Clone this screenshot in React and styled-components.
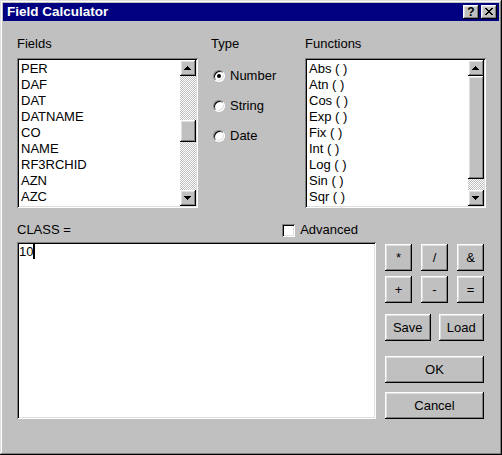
import styled, { createGlobalStyle } from "styled-components";

const GlobalStyle = createGlobalStyle`
  html, body {
    margin: 0;
    padding: 0;
    background: #c0c0c0;
  }
  body {
    font-family: "Liberation Sans", Arial, sans-serif;
    font-size: 13px;
    color: #000;
  }
`;

const raised = `
  box-shadow: inset -1px -1px #000, inset 1px 1px #fff,
    inset -2px -2px #808080, inset 2px 2px #dfdfdf;
`;
const sunken = `
  box-shadow: inset 1px 1px #808080, inset -1px -1px #fff,
    inset 2px 2px #000, inset -2px -2px #dfdfdf;
`;

const Window = styled.div`
  width: 502px;
  height: 455px;
  box-sizing: border-box;
  padding: 3px;
  background: #c0c0c0;
  box-shadow: inset -1px -1px #000, inset 1px 1px #dfdfdf,
    inset -2px -2px #808080, inset 2px 2px #fff;
  display: flex;
  flex-direction: column;
`;
const TitleBar = styled.div`
  height: 18px;
  background: #000080;
  display: flex;
  align-items: center;
  padding: 0 2px;
  color: #fff;
`;
const TitleText = styled.div`
  flex: 1;
  padding-left: 2px;
  line-height: 18px;
  font-size: 13.5px;
  font-weight: bold;
  white-space: nowrap;
`;
const CaptionButtons = styled.div`
  display: flex;
  gap: 2px;
`;
const CaptionButton = styled.div`
  width: 16px;
  height: 14px;
  background: #c0c0c0;
  ${raised}
  display: flex;
  align-items: center;
  justify-content: center;
  color: #000;
  font-weight: bold;
  font-size: 12px;
  line-height: 14px;
`;
const Body = styled.div`
  padding: 15px 16px 0 14px;
  display: flex;
  flex-direction: column;
`;
const TopRow = styled.div`
  display: grid;
  grid-template-columns: 181px 81px 181px;
  column-gap: 13px;
`;
const Group = styled.div`
  display: flex;
  flex-direction: column;
  gap: 6px;
`;
const Label = styled.div`
  line-height: 16px;
  white-space: nowrap;
`;
const ListBox = styled.div`
  height: 150px;
  box-sizing: border-box;
  padding: 2px;
  background: #fff;
  ${sunken}
  display: flex;
`;
const Items = styled.div`
  flex: 1;
  padding: 1px 2px;
  overflow: hidden;
`;
const Item = styled.div`
  line-height: 16px;
  white-space: nowrap;
`;
const ScrollBar = styled.div`
  width: 16px;
  display: flex;
  flex-direction: column;
`;
const ArrowButton = styled.div`
  width: 16px;
  height: 16px;
  flex-shrink: 0;
  background: #c0c0c0;
  ${raised}
  display: flex;
  align-items: center;
  justify-content: center;
`;
const Track = styled.div`
  flex: 1;
  display: flex;
  flex-direction: column;
  background: repeating-conic-gradient(#c0c0c0 0% 25%, #fff 0% 50%) 0 0 / 2px 2px;
`;
const Thumb = styled.div`
  margin-top: ${(p) => p.$offset}px;
  height: ${(p) => p.$size}px;
  background: #c0c0c0;
  ${raised}
`;
const RadioList = styled.div`
  display: flex;
  flex-direction: column;
  gap: 14px;
  padding-top: 10px;
`;
const Radio = styled.div`
  display: flex;
  align-items: center;
  gap: 5px;
  padding-left: 2px;
  line-height: 16px;
  white-space: nowrap;
`;
const RadioDot = styled.span`
  width: 12px;
  height: 12px;
  box-sizing: border-box;
  border-radius: 50%;
  background: #fff;
  border: 1px solid;
  border-color: #808080 #fff #fff #808080;
  box-shadow: inset 1px 1px #000, inset -1px -1px #dfdfdf;
  position: relative;
  &::after {
    content: "";
    display: ${(p) => (p.$checked ? "block" : "none")};
    position: absolute;
    left: 3px;
    top: 3px;
    width: 4px;
    height: 4px;
    border-radius: 50%;
    background: #000;
  }
`;
const Bottom = styled.div`
  margin-top: 14px;
  display: grid;
  grid-template-columns: 359px 99px;
  grid-template-rows: 16px 177px;
  column-gap: 9px;
  row-gap: 4px;
`;
const LabelRow = styled.div`
  grid-column: 1;
  display: flex;
  align-items: center;
  line-height: 16px;
`;
const CheckLabel = styled.label`
  margin-left: auto;
  margin-right: 18px;
  display: flex;
  align-items: center;
  gap: 5px;
`;
const CheckBox = styled.span`
  width: 13px;
  height: 13px;
  background: #fff;
  ${sunken}
`;
const EditBox = styled.div`
  grid-column: 1;
  background: #fff;
  ${sunken}
  padding: 2px 2px;
  line-height: 16px;
`;
const Caret = styled.span`
  display: inline-block;
  width: 2px;
  height: 15px;
  background: #000;
  vertical-align: -3px;
`;
const ButtonColumn = styled.div`
  grid-column: 2;
  margin-top: 2px;
  display: flex;
  flex-direction: column;
`;
const ButtonGrid = styled.div`
  display: grid;
  grid-template-columns: repeat(${(p) => p.$cols}, 1fr);
  column-gap: ${(p) => p.$colGap}px;
  row-gap: ${(p) => p.$rowGap || 0}px;
  margin-top: ${(p) => p.$top || 0}px;
`;
const Button = styled.button`
  height: 27px;
  padding: 0;
  border: none;
  background: #c0c0c0;
  ${raised}
  font-family: inherit;
  font-size: 13px;
  color: #000;
  line-height: 16px;
`;

const ArrowIcon = ({ down }) => (
  <svg width="7" height="4" viewBox="0 0 7 4" shapeRendering="crispEdges" style={{ marginTop: -1, marginLeft: -1 }}>
    {[0, 1, 2, 3].map((r) => {
      const row = down ? 3 - r : r;
      return <rect key={r} x={3 - r} y={row} width={r * 2 + 1} height="1" fill="#000" />;
    })}
  </svg>
);

const CloseIcon = () => (
  <svg width="8" height="7" viewBox="0 0 8 7" shapeRendering="crispEdges" style={{ marginTop: -1 }}>
    <rect x="0" y="0" width="2" height="1" fill="#000" />
    <rect x="6" y="0" width="2" height="1" fill="#000" />
    <rect x="1" y="1" width="2" height="1" fill="#000" />
    <rect x="5" y="1" width="2" height="1" fill="#000" />
    <rect x="2" y="2" width="4" height="1" fill="#000" />
    <rect x="3" y="3" width="2" height="1" fill="#000" />
    <rect x="2" y="4" width="4" height="1" fill="#000" />
    <rect x="1" y="5" width="2" height="1" fill="#000" />
    <rect x="5" y="5" width="2" height="1" fill="#000" />
    <rect x="0" y="6" width="2" height="1" fill="#000" />
    <rect x="6" y="6" width="2" height="1" fill="#000" />
  </svg>
);

const List = ({ items, thumbOffset, thumbSize }) => (
  <ListBox>
    <Items>
      {items.map((it) => (
        <Item key={it}>{it}</Item>
      ))}
    </Items>
    <ScrollBar>
      <ArrowButton>
        <ArrowIcon />
      </ArrowButton>
      <Track>
        <Thumb $offset={thumbOffset} $size={thumbSize} />
      </Track>
      <ArrowButton>
        <ArrowIcon down />
      </ArrowButton>
    </ScrollBar>
  </ListBox>
);

const fields = ["PER", "DAF", "DAT", "DATNAME", "CO", "NAME", "RF3RCHID", "AZN", "AZC"];
const functions = ["Abs ( )", "Atn ( )", "Cos ( )", "Exp ( )", "Fix ( )", "Int ( )", "Log ( )", "Sin ( )", "Sqr ( )"];
const types = ["Number", "String", "Date"];
const operators = ["*", "/", "&", "+", "-", "="];

export default function App() {
  return (
    <>
      <GlobalStyle />
      <Window>
        <TitleBar>
          <TitleText>Field Calculator</TitleText>
          <CaptionButtons>
            <CaptionButton>?</CaptionButton>
            <CaptionButton>
              <CloseIcon />
            </CaptionButton>
          </CaptionButtons>
        </TitleBar>
        <Body>
          <TopRow>
            <Group>
              <Label>Fields</Label>
              <List items={fields} thumbOffset={44} thumbSize={22} />
            </Group>
            <Group>
              <Label>Type</Label>
              <RadioList>
                {types.map((t, i) => (
                  <Radio key={t}>
                    <RadioDot $checked={i === 0} />
                    {t}
                  </Radio>
                ))}
              </RadioList>
            </Group>
            <Group>
              <Label>Functions</Label>
              <List items={functions} thumbOffset={0} thumbSize={103} />
            </Group>
          </TopRow>
          <Bottom>
            <LabelRow>
              <span>CLASS =</span>
              <CheckLabel>
                <CheckBox />
                Advanced
              </CheckLabel>
            </LabelRow>
            <EditBox>
              10
              <Caret />
            </EditBox>
            <ButtonColumn>
              <ButtonGrid $cols={3} $colGap={9} $rowGap={5}>
                {operators.map((op) => (
                  <Button key={op}>{op}</Button>
                ))}
              </ButtonGrid>
              <ButtonGrid $cols={2} $colGap={8} $top={11}>
                <Button>Save</Button>
                <Button>Load</Button>
              </ButtonGrid>
              <ButtonGrid $cols={1} $colGap={0} $rowGap={9} $top={15}>
                <Button>OK</Button>
                <Button>Cancel</Button>
              </ButtonGrid>
            </ButtonColumn>
          </Bottom>
        </Body>
      </Window>
    </>
  );
}
